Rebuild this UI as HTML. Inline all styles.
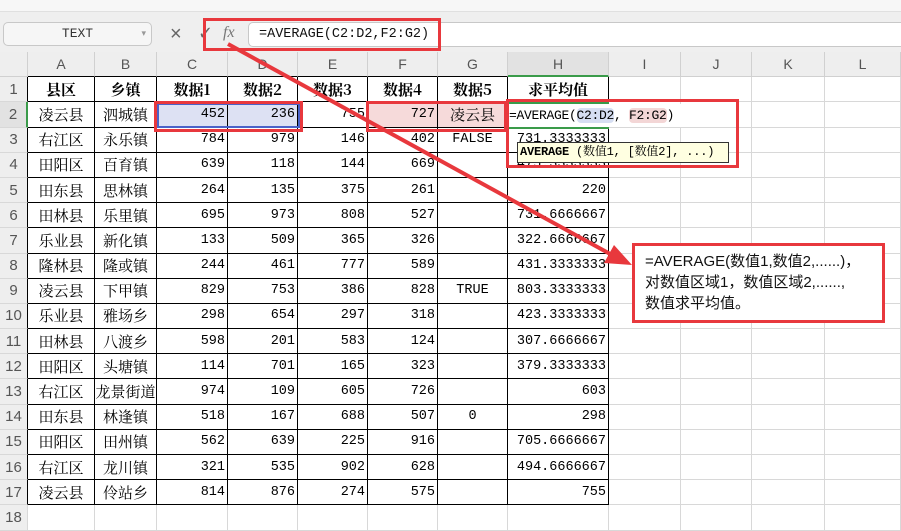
<!DOCTYPE html><html><head><meta charset="utf-8"><style>
*{box-sizing:border-box;margin:0;padding:0}
body{width:901px;height:527px;overflow:hidden;background:#fff;position:relative;font-family:"Liberation Mono","Noto Serif CJK SC",monospace}
.top{position:absolute;left:0;top:0;width:901px;height:12px;background:#f7f7f7;border-bottom:1px solid #e0e0e0}
.bar{position:absolute;left:0;top:12px;width:901px;height:40px;background:#efefef}
.nb{position:absolute;left:3px;top:22px;width:149px;height:24px;border:1px solid #c8c8c8;border-radius:5px;background:#f6f6f6;font-size:13px;color:#333;text-align:center;line-height:22px}
.fi{position:absolute;left:248px;top:22px;width:660px;height:25px;border:1px solid #c8c8c8;border-radius:5px;background:#fff;font-size:13.5px;line-height:23px;padding-left:10px;color:#111}
table{position:absolute;left:0;top:52px;border-collapse:separate;border-spacing:0;table-layout:fixed;width:901px}
td{height:25.2px;border-right:1px solid #d8d8d8;border-bottom:1px solid #d8d8d8;font-size:13.5px;text-align:right;padding:0 2px;white-space:nowrap;overflow:hidden;font-family:"Liberation Mono","Noto Serif CJK SC",monospace}
tr.h td{background:#eeeeee;text-align:center;color:#555;font-family:"Liberation Sans",sans-serif;font-size:14px;border-color:#d0d0d0}
td.r{background:#eeeeee;text-align:center;color:#555;font-family:"Liberation Sans",sans-serif;font-size:15px;padding:0;border-right:1px solid #000}
td.k{border-right:1px solid #000;border-bottom:1px solid #000}
tr.h td.k{border-bottom:1px solid #000;border-right-color:#d0d0d0}
td.c{text-align:center;font-family:"Noto Serif CJK SC",serif;font-size:15px}
tr.t td.k{font-weight:bold;text-align:center;font-family:"Noto Serif CJK SC",serif;font-size:15px}
.box{position:absolute;border:3px solid #e8383d}
.call{position:absolute;left:632px;top:243px;width:253px;height:80px;border:3px solid #e8383d;background:#fff;font-family:"Liberation Sans","Noto Sans CJK SC",sans-serif;font-size:15px;line-height:21px;padding:5px 0 0 10px;color:#111}
</style></head><body>
<div class="top"></div><div class="bar"></div>
<div class="nb">TEXT <span style="position:absolute;right:5px;font-size:9px;color:#999">▾</span></div>
<div style="position:absolute;left:170px;top:23px;font-size:20px;color:#666;font-family:'Liberation Sans'">×</div>
<div style="position:absolute;left:198px;top:23px;font-size:18px;color:#666;font-family:'DejaVu Sans'">✓</div>
<div style="position:absolute;left:223px;top:24px;font-size:16px;color:#777;font-style:italic;font-family:'Liberation Serif'">fx</div>
<div class="fi">=AVERAGE(C2:D2,F2:G2)</div>
<table>
<colgroup><col style="width:28px"><col style="width:67px"><col style="width:62px"><col style="width:71px"><col style="width:70px"><col style="width:70px"><col style="width:70px"><col style="width:70px"><col style="width:101px"><col style="width:72px"><col style="width:71px"><col style="width:73px"><col style="width:76px"></colgroup>
<tr class="h"><td></td><td class="k">A</td><td class="k">B</td><td class="k">C</td><td class="k">D</td><td class="k">E</td><td class="k">F</td><td class="k">G</td><td class="k" style="border-bottom:2px solid #3a9b4a;background:#e2e2e2">H</td><td>I</td><td>J</td><td>K</td><td>L</td></tr>
<tr class="t"><td class="r">1</td><td class="k">县区</td><td class="k">乡镇</td><td class="k">数据1</td><td class="k">数据2</td><td class="k">数据3</td><td class="k">数据4</td><td class="k">数据5</td><td class="k">求平均值</td><td></td><td></td><td></td><td></td></tr>
<tr><td class="r" style="border-right:2px solid #3a9b4a;background:#e2e2e2">2</td><td class="k c">凌云县</td><td class="k c">泗城镇</td><td class="k" style="background:#dde1f3">452</td><td class="k" style="background:#dde1f3">236</td><td class="k">755</td><td class="k" style="background:#f6dada">727</td><td class="k c" style="background:#f6dada">凌云县</td><td class="k"></td><td></td><td></td><td></td><td></td></tr>
<tr><td class="r">3</td><td class="k c">右江区</td><td class="k c">永乐镇</td><td class="k">784</td><td class="k">979</td><td class="k">146</td><td class="k">402</td><td class="k" style="text-align:center">FALSE</td><td class="k">731.3333333</td><td></td><td></td><td></td><td></td></tr>
<tr><td class="r">4</td><td class="k c">田阳区</td><td class="k c">百育镇</td><td class="k">639</td><td class="k">118</td><td class="k">144</td><td class="k">669</td><td class="k"></td><td class="k">475.3333333</td><td></td><td></td><td></td><td></td></tr>
<tr><td class="r">5</td><td class="k c">田东县</td><td class="k c">思林镇</td><td class="k">264</td><td class="k">135</td><td class="k">375</td><td class="k">261</td><td class="k"></td><td class="k">220</td><td></td><td></td><td></td><td></td></tr>
<tr><td class="r">6</td><td class="k c">田林县</td><td class="k c">乐里镇</td><td class="k">695</td><td class="k">973</td><td class="k">808</td><td class="k">527</td><td class="k"></td><td class="k">731.6666667</td><td></td><td></td><td></td><td></td></tr>
<tr><td class="r">7</td><td class="k c">乐业县</td><td class="k c">新化镇</td><td class="k">133</td><td class="k">509</td><td class="k">365</td><td class="k">326</td><td class="k"></td><td class="k">322.6666667</td><td></td><td></td><td></td><td></td></tr>
<tr><td class="r">8</td><td class="k c">隆林县</td><td class="k c">隆或镇</td><td class="k">244</td><td class="k">461</td><td class="k">777</td><td class="k">589</td><td class="k"></td><td class="k">431.3333333</td><td></td><td></td><td></td><td></td></tr>
<tr><td class="r">9</td><td class="k c">凌云县</td><td class="k c">下甲镇</td><td class="k">829</td><td class="k">753</td><td class="k">386</td><td class="k">828</td><td class="k" style="text-align:center">TRUE</td><td class="k">803.3333333</td><td></td><td></td><td></td><td></td></tr>
<tr><td class="r">10</td><td class="k c">乐业县</td><td class="k c">雅场乡</td><td class="k">298</td><td class="k">654</td><td class="k">297</td><td class="k">318</td><td class="k"></td><td class="k">423.3333333</td><td></td><td></td><td></td><td></td></tr>
<tr><td class="r">11</td><td class="k c">田林县</td><td class="k c">八渡乡</td><td class="k">598</td><td class="k">201</td><td class="k">583</td><td class="k">124</td><td class="k"></td><td class="k">307.6666667</td><td></td><td></td><td></td><td></td></tr>
<tr><td class="r">12</td><td class="k c">田阳区</td><td class="k c">头塘镇</td><td class="k">114</td><td class="k">701</td><td class="k">165</td><td class="k">323</td><td class="k"></td><td class="k">379.3333333</td><td></td><td></td><td></td><td></td></tr>
<tr><td class="r">13</td><td class="k c">右江区</td><td class="k c" style="padding:0">龙景街道</td><td class="k">974</td><td class="k">109</td><td class="k">605</td><td class="k">726</td><td class="k"></td><td class="k">603</td><td></td><td></td><td></td><td></td></tr>
<tr><td class="r">14</td><td class="k c">田东县</td><td class="k c">林逢镇</td><td class="k">518</td><td class="k">167</td><td class="k">688</td><td class="k">507</td><td class="k" style="text-align:center">0</td><td class="k">298</td><td></td><td></td><td></td><td></td></tr>
<tr><td class="r">15</td><td class="k c">田阳区</td><td class="k c">田州镇</td><td class="k">562</td><td class="k">639</td><td class="k">225</td><td class="k">916</td><td class="k"></td><td class="k">705.6666667</td><td></td><td></td><td></td><td></td></tr>
<tr><td class="r">16</td><td class="k c">右江区</td><td class="k c">龙川镇</td><td class="k">321</td><td class="k">535</td><td class="k">902</td><td class="k">628</td><td class="k"></td><td class="k">494.6666667</td><td></td><td></td><td></td><td></td></tr>
<tr><td class="r">17</td><td class="k c">凌云县</td><td class="k c">伶站乡</td><td class="k">814</td><td class="k">876</td><td class="k">274</td><td class="k">575</td><td class="k"></td><td class="k">755</td><td></td><td></td><td></td><td></td></tr>
<tr><td class="r" style="border-right-color:#d8d8d8">18</td><td></td><td></td><td></td><td></td><td></td><td></td><td></td><td></td><td></td><td></td><td></td><td></td></tr>
</table>
<div style="position:absolute;left:509px;top:104px;width:190px;height:23px;background:#fff;font-size:13px;line-height:23px;white-space:nowrap;letter-spacing:-0.3px">=AVERAGE(<span style="background:#d6def2;border-radius:4px">C2:D2</span>, <span style="background:#f3d6d6;border-radius:4px">F2:G2</span>)</div>
<div style="position:absolute;left:157px;top:103px;width:143px;height:25px;border:2px solid #4a62c8"></div>
<div style="position:absolute;left:509px;top:102px;width:100px;height:2px;background:#3a9b4a"></div>
<div style="position:absolute;left:509px;top:127px;width:100px;height:2px;background:#3a9b4a"></div>
<div style="position:absolute;left:517px;top:142px;width:212px;height:21px;background:#ffffe1;border:1px solid #333;font-size:12px;line-height:19px;padding-left:2px;font-family:'Liberation Mono','Noto Serif CJK SC',monospace;white-space:nowrap;overflow:hidden;letter-spacing:-0.2px"><b>AVERAGE</b> (数值1, [数值2], ...)</div>
<div class="box" style="left:203px;top:18px;width:238px;height:33px"></div>
<div class="box" style="left:154px;top:101px;width:149px;height:31px"></div>
<div class="box" style="left:366px;top:101px;width:141px;height:31px"></div>
<div class="box" style="left:506px;top:99px;width:233px;height:69px"></div>
<svg style="position:absolute;left:0;top:0" width="901" height="527"><line x1="228" y1="44" x2="612" y2="255" stroke="#e8383d" stroke-width="4"/><polygon points="632,265 604,263 614,245" fill="#e8383d"/></svg>
<div class="call">=AVERAGE(数值1,数值2,......)，<br>对数值区域1，数值区域2,......,<br>数值求平均值。</div>
</body></html>
